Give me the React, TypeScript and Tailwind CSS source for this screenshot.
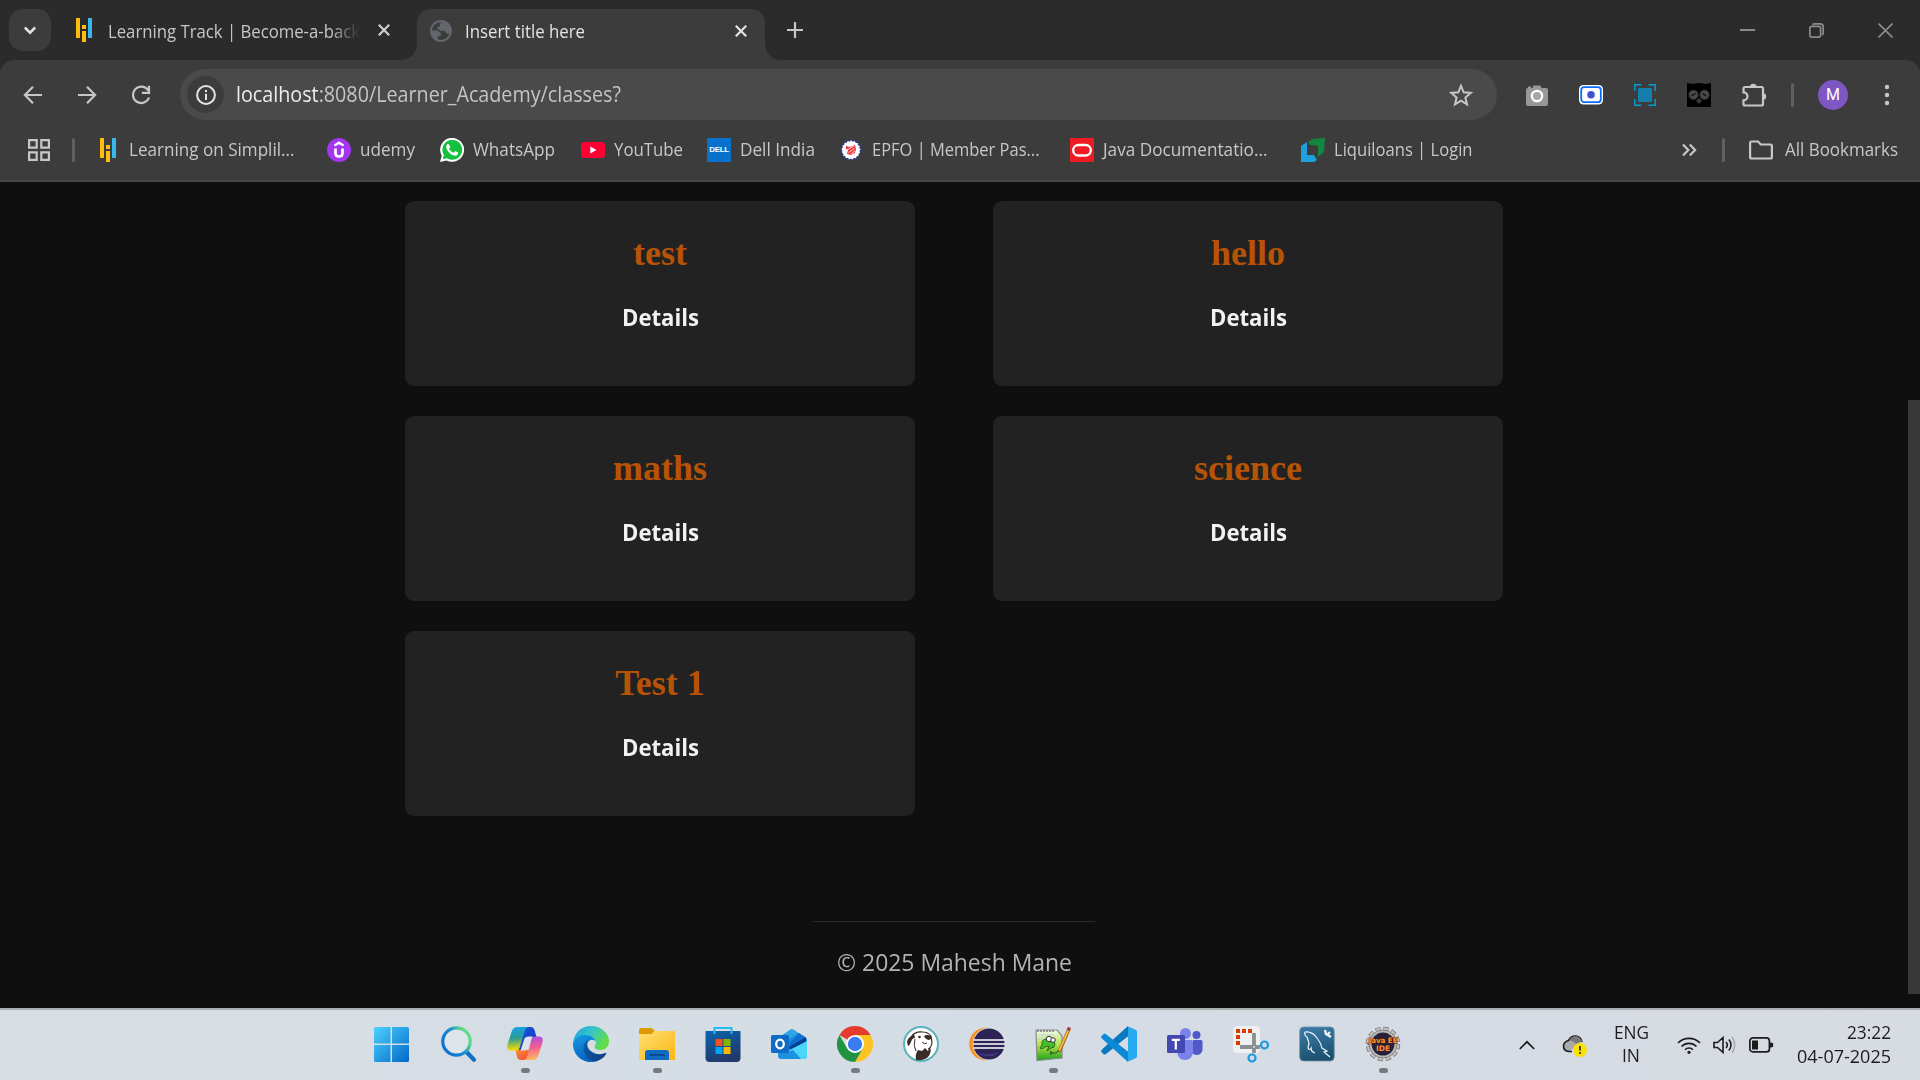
import React, { useLayoutEffect, useRef } from "react";

/** Single line of text condensed or widened to an exact width. */
function Fit({ w, className = "", children }: { w: number; className?: string; children: React.ReactNode }) {
  const ref = useRef<HTMLSpanElement>(null);
  useLayoutEffect(() => {
    const el = ref.current;
    if (el && el.offsetWidth) {
      el.style.transform = "none";
      el.style.transform = `scaleX(${w / el.getBoundingClientRect().width})`;
    }
  }, [w]);
  return (
    <span className="block shrink-0 whitespace-nowrap" style={{ width: w }}>
      <span ref={ref} className={"inline-block origin-left whitespace-nowrap " + className}>{children}</span>
    </span>
  );
}

const Simplilearn = () => (
  <svg width="24" height="24" viewBox="0 0 24 24">
    <path d="M4 0h4v20H4zM10 7h4v4h-4zM10 13h4v11h-4z" fill="#fdbd10" />
    <path d="M16 0h4v20h-4z" fill="#3ab5ee" />
  </svg>
);

const CloseX = ({ color }: { color: string }) => (
  <svg width="14" height="14" viewBox="0 0 14 14">
    <path d="M1.8 1.8l10.4 10.4M12.2 1.8L1.8 12.2" stroke={color} strokeWidth="2.2" />
  </svg>
);

const Globe = () => (
  <svg width="22" height="22" viewBox="0 0 22 22">
    <circle cx="11" cy="11" r="10" fill="none" stroke="#62676d" strokeWidth="2" />
    <path d="M1 10.5h6.5l3.3 2.7v3h-3v4L5 18.5 2 14zM12 1l-2 3v2.5H7.5V9l3 1.8h4l2 2.7 3.5.5 1-3-1-5L16 2z" fill="#62676d" />
  </svg>
);

const TabStrip = () => (
  <div className="flex h-[60px] shrink-0 items-center bg-[#2b2b2b] pl-[9px] pr-[27px]">
    <div className="flex h-[42px] w-[42px] items-center justify-center rounded-[14px] bg-[#3c3c3c]">
      <svg width="14" height="14" viewBox="0 0 14 14"><path d="M1.8 4.5L7 9.7l5.2-5.2" fill="none" stroke="#e3e3e3" strokeWidth="2.5" /></svg>
    </div>
    <div className="flex h-full w-[366px] items-center pl-[21px]">
      <Simplilearn />
      <div className="ml-[12px] w-[252px] overflow-hidden pt-[2px] text-[18px] leading-[28px] text-[#c7c7c7] [mask-image:linear-gradient(to_right,black_88%,transparent)]">
        <Fit w={252}>Learning Track | Become-a-back</Fit>
      </div>
      <div className="ml-[17px]"><CloseX color="#d0d0d0" /></div>
    </div>
    <div className="relative mt-[9px] flex h-[51px] w-[348px] items-center rounded-t-[14px] bg-[#3c3c3c] pb-[8px] pl-[13px] pr-[17px]">
      <span className="absolute -left-[15px] bottom-0 h-[15px] w-[15px] bg-[radial-gradient(circle_at_0_0,transparent_14.5px,#3c3c3c_15px)]" />
      <span className="absolute -right-[15px] bottom-0 h-[15px] w-[15px] bg-[radial-gradient(circle_at_100%_0,transparent_14.5px,#3c3c3c_15px)]" />
      <Globe />
      <div className="ml-[13px] text-[18px] leading-[28px] text-[#e3e3e3]"><Fit w={120}>Insert title here</Fit></div>
      <div className="ml-auto"><CloseX color="#e3e3e3" /></div>
    </div>
    <svg className="ml-[22px]" width="16" height="16" viewBox="0 0 16 16"><path d="M8 0v16M0 8h16" stroke="#c7c7c7" strokeWidth="2.2" /></svg>
    <div className="ml-auto flex items-center gap-[54px]">
      <svg width="15" height="15" viewBox="0 0 15 15"><path d="M0 7h15" stroke="#8b8b8b" strokeWidth="2" /></svg>
      <svg width="15" height="15" viewBox="0 0 15 15" fill="none" stroke="#8b8b8b" strokeWidth="1.7">
        <rect x=".9" y="3.4" width="10.7" height="10.7" rx="2" /><path d="M3.4 1.6Q4.200 .9 5.500 .9H11a3.200 3.200 0 0 1 3.200 3.200V10Q14.200 11.200 13.200 12" />
      </svg>
      <svg width="15" height="15" viewBox="0 0 15 15"><path d="M.5 .5l14 14M14.500 .5l-14 14" stroke="#8b8b8b" strokeWidth="1.600" /></svg>
    </div>
  </div>
);

const Toolbar = () => (
  <div className="flex h-[69px] items-center pl-[23px] pr-[27px]">
    <svg width="20" height="20" viewBox="0 0 20 20" fill="none" stroke="#c7c7c7" strokeWidth="2.2"><path d="M19 10H2.500M10 1.700L1.900 10l8.100 8.300" /></svg>
    <svg className="ml-[34px]" width="20" height="20" viewBox="0 0 20 20" fill="none" stroke="#c7c7c7" strokeWidth="2.2"><path d="M1 10h16.500M10 1.700l8.100 8.300-8.100 8.300" /></svg>
    <svg className="ml-[34px]" width="20" height="20" viewBox="0 0 20 20" fill="none" stroke="#c7c7c7" strokeWidth="2.200"><path d="M17.200 5.500A8.200 8.200 0 1 0 18 12.500M18 .8v7.100h-7.200" /></svg>
    <div className="ml-[29px] flex h-[51px] w-[1317px] items-center rounded-full bg-[#4a4a4a] pl-[7px] pr-[24px]">
      <div className="flex h-[37px] w-[37px] items-center justify-center rounded-full bg-[#3c3c3c]">
        <svg width="20" height="20" viewBox="0 0 20 20"><circle cx="10" cy="10" r="8.900" fill="none" stroke="#e3e3e3" strokeWidth="2" /><path d="M9 5h2v2H9zM9 8.700h2V15H9z" fill="#e3e3e3" /></svg>
      </div>
      <div className="ml-[12px] pb-[2px] text-[21px] leading-[28px] text-[#c4c4c4]">
        <Fit w={385}><span className="text-[#ececec]">localhost</span>:8080/Learner_Academy/classes?</Fit>
      </div>
      <svg className="ml-auto" width="24" height="24" viewBox="0 0 24 24"><path d="M12 2.800l2.700 6.500 7 .6-5.300 4.600 1.600 6.900-6-3.700-6 3.700 1.600-6.900L2.300 9.900l7-.6z" fill="none" stroke="#c7c7c7" strokeWidth="2" /></svg>
    </div>
    <div className="ml-[28px] flex items-center gap-[30px]">
      <svg width="24" height="24" viewBox="0 0 24 24"><path d="M7.500 5l1-2.500h7l1 2.500H21q2 0 2 2v14q0 2-2 2H3q-2 0-2-2V7q0-2 2-2V3.500h3V5z" fill="#989898" /><circle cx="12" cy="13" r="5.200" fill="#a5a5a5" stroke="#fff" strokeWidth="2.200" /></svg>
      <svg width="24" height="24" viewBox="0 0 24 24"><rect x="0" y="2" width="24" height="19.500" rx="4.500" fill="#fff" /><rect x="2.200" y="4.200" width="19.600" height="15" rx="3" fill="#fff" stroke="#0a6cff" strokeWidth="1.800" /><circle cx="12" cy="11.700" r="3.800" fill="#4353d0" /></svg>
      <svg width="24" height="24" viewBox="0 0 24 24"><path d="M5 5h14v14H5z" fill="#147fab" /><path d="M1.800 8V1.800H8.500M15.500 1.800h6.700V8M22.200 16v6.200h-6.700M8.500 22.200H1.800V16" fill="none" stroke="#00a0d8" strokeWidth="1.400" /></svg>
      <svg width="26" height="26" viewBox="0 0 26 26" className="-mx-px"><path d="M1 1l6 1q6-2 12 0l6-1v24H1z" fill="#000" /><circle cx="7.500" cy="12.800" r="4.600" fill="#4b4b4b" stroke="#333" strokeWidth="1.500" strokeDasharray="1 1" /><circle cx="18.500" cy="12.800" r="4.600" fill="#4b4b4b" stroke="#333" strokeWidth="1.500" strokeDasharray="1 1" /><path d="M5.500 14l4-2.500M16.500 11.500l4 2.500" stroke="#1a1a1a" strokeWidth="1.500" /><path d="M13 16l3 3-3 3-3-3z" fill="#393939" /></svg>
      <svg width="26" height="26" viewBox="0 0 26 26" fill="none"><path d="M4 5h16.500q1.500 0 1.500 1.500V22q0 1.500-1.500 1.500H4q-1.500 0-1.500-1.500v-3.700a4 4 0 0 0 0-8V6.500Q2.500 5 4 5z" stroke="#c7c7c7" strokeWidth="2.200" /><path d="M9 5a3.300 3.300 0 0 1 6.600 0zM22 11.300a3.200 3.200 0 0 1 0 6.400z" fill="#c7c7c7" /></svg>
    </div>
    <div className="ml-[24px] h-[24px] w-[3px] rounded-full bg-[#606060]" />
    <div className="ml-[24px] flex h-[30px] w-[30px] items-center justify-center rounded-full bg-[#7e57c2] font-['Roboto'] text-[16px] font-normal text-white">M</div>
    <svg className="ml-auto" width="12" height="24" viewBox="0 0 12 24" fill="#c7c7c7"><circle cx="6" cy="4" r="2.200" /><circle cx="6" cy="12" r="2.200" /><circle cx="6" cy="20" r="2.200" /></svg>
  </div>
);

const Udemy = () => (
  <svg width="24" height="24" viewBox="0 0 24 24"><circle cx="12" cy="12" r="12" fill="#a435f0" /><path d="M8.500 10.500v4.700q0 3.300 3.500 3.300t3.500-3.300v-4.700" fill="none" stroke="#fff" strokeWidth="2.700" /><path d="M7.500 7.500L12 4.700l4.500 2.800" fill="none" stroke="#fff" strokeWidth="2.300" /></svg>
);
const WhatsApp = () => (
  <svg width="24" height="24" viewBox="0 0 24 24"><path d="M0 24l1.700-6.200A12 12 0 1 1 6.400 22.400z" fill="#fff" /><path d="M2.700 21.300l1.200-4.200A9.900 9.900 0 1 1 7 20.200z" fill="#14c13e" /><path d="M8.700 6.300c-.5-.4-1.300-.3-1.800.3-2.900 3.300 3.300 11.200 8.200 11.200 2 0 3.300-1.400 3-3.200l-3-1.500-1.400 1.700c-2.400-.8-4-2.600-4.600-4.100L10.300 9z" fill="#fff" /></svg>
);
const YouTube = () => (
  <svg width="24" height="24" viewBox="0 0 24 24"><rect y="4" width="24" height="16" rx="3.500" fill="#ff0033" /><path d="M9.300 8.500v7l6.200-3.500z" fill="#fff" /></svg>
);
const Dell = () => (
  <div className="flex h-6 w-6 items-center justify-center bg-[#0672cb] font-['Liberation_Sans'] text-[8px] font-bold leading-none tracking-[-0.4px] text-white">DELL</div>
);
const Epfo = () => (
  <svg width="24" height="24" viewBox="0 0 24 24"><circle cx="12" cy="12" r="9.500" fill="#fff" stroke="#263f9b" strokeWidth="1.800" strokeDasharray="2 1.500" /><circle cx="12" cy="12" r="8.500" fill="#fff" /><path d="M7 8l4 1 5-2 1 4-1 4-4 2-4-1 1-4-2-1z" fill="#f03838" /><path d="M8 12l7-4M9.500 14.500l6-4M12 16l4-3" stroke="#fff" strokeWidth=".8" /></svg>
);
const Oracle = () => (
  <svg width="24" height="24" viewBox="0 0 24 24"><path d="M0 0h24v24H0z" fill="#ee1b24" /><rect x="3.200" y="7" width="17.600" height="10.500" rx="5.200" fill="none" stroke="#fff" strokeWidth="2.300" /></svg>
);
const Liquiloans = () => (
  <svg width="24" height="24" viewBox="0 0 24 24"><path d="M7 4l4-3 13-1-1 14-6 5V8L9 7z" fill="#12853f" /><path d="M0 8l6-4v13h7l3 5-3 2H0z" fill="#1f9fdd" /></svg>
);

const bookmarks: [React.FC, string, number][] = [
  [Simplilearn, "Learning on Simplil...", 165.5],
  [Udemy, "udemy", 55],
  [WhatsApp, "WhatsApp", 82],
  [YouTube, "YouTube", 69],
  [Dell, "Dell India", 75],
  [Epfo, "EPFO | Member Pas...", 167.5],
  [Oracle, "Java Documentatio...", 164.5],
  [Liquiloans, "Liquiloans | Login", 138.5],
];

const BookmarksBar = () => (
  <div className="flex h-[41px] items-center pt-px text-[18px] leading-[28px] text-[#c7c7c7]">
    <svg className="ml-[28px]" width="22" height="22" viewBox="0 0 22 22" fill="none" stroke="#c7c7c7" strokeWidth="2.200"><path d="M1.100 1.100h7.600v7.600H1.100zM13.300 1.100h7.600v7.600h-7.600zM1.100 13.300h7.600v7.600H1.100zM13.300 13.300h7.600v7.600h-7.600z" /></svg>
    <div className="ml-[22px] h-[24px] w-[3px] rounded-full bg-[#606060]" />
    <div className="ml-[21px] grid grid-cols-[231px_113px_141px_126px_132px_231px_231px_200px]">
      {bookmarks.map(([Icon, label, w]) => (
        <div key={label} className="flex items-center gap-[9px]">
          <Icon />
          <div className="-mt-[2px]"><Fit w={w}>{label}</Fit></div>
        </div>
      ))}
    </div>
    <div className="ml-auto flex items-center pr-[22px]">
      <svg width="16" height="14" viewBox="0 0 16 14" fill="none" stroke="#c7c7c7" strokeWidth="2.200"><path d="M2 1.500L7.300 7 2 12.500M8.800 1.500L14.100 7l-5.300 5.500" /></svg>
      <div className="ml-[25px] h-[24px] w-[3px] rounded-full bg-[#606060]" />
      <svg className="ml-[24px]" width="24" height="20" viewBox="0 0 24 20" fill="none" stroke="#c7c7c7" strokeWidth="2.200"><path d="M1.100 3q0-1.500 1.500-1.500H9l2.800 3h9.600q1.500 0 1.500 1.500v11q0 1.500-1.500 1.500H2.600q-1.500 0-1.500-1.500z" /></svg>
      <div className="-mt-[2px] ml-[12px]"><Fit w={113}>All Bookmarks</Fit></div>
    </div>
  </div>
);

const classes = ["test", "hello", "maths", "science", "Test 1"];

const Page = () => (
  <div className="flex h-[826px] shrink-0 bg-[#0f0f0f]">
    <div className="flex flex-1 flex-col items-center pt-[19px]">
      <div className="grid grid-cols-[510px_510px] gap-x-[78px] gap-y-[30px]">
        {classes.map((name) => (
          <div key={name} className="flex h-[185px] flex-col items-center rounded-[9px] bg-[#222] pt-[32px]">
            <h2 className="font-['Liberation_Serif'] text-[36px] font-bold leading-[40px] text-[#b75306]">{name}</h2>
            <a className="mt-[28px] text-[24px] font-bold leading-[32px] text-[#f2f2f2]"><Fit w={77}>Details</Fit></a>
          </div>
        ))}
      </div>
      <div className="mt-[105px] flex w-[282px] flex-col items-center border-t border-[#2a2a2a] pt-[24px] text-[24px] leading-[32px] text-[#b3b3b3]">
        <Fit w={235}>© 2025 Mahesh Mane</Fit>
      </div>
    </div>
    <div className="w-[12px] pt-[218px]"><div className="h-[594px] bg-[#383838]" /></div>
  </div>
);

const I = ({ children }: { children: React.ReactNode }) => <svg className="overflow-visible" width="36" height="36" viewBox="0 0 36 36">{children}</svg>;
const G = ({ id, a, b, m, x2 = 1, y2 = 1 }: { id: string; a: string; b: string; m?: string; x2?: number; y2?: number }) => (
  <linearGradient id={id} x1="0" y1="0" x2={x2} y2={y2}><stop stopColor={a} />{m && <stop offset=".5" stopColor={m} />}<stop offset="1" stopColor={b} /></linearGradient>
);

const Start = () => (
  <I><defs><linearGradient id="win" gradientUnits="userSpaceOnUse" x1="0" y1="0" x2="36" y2="36"><stop stopColor="#4fd4ff" /><stop offset="1" stopColor="#0067c8" /></linearGradient></defs>
    <path transform="translate(-1.500 0)" d="M2 1h15v16.500H.5V2.500Q.5 1 2 1zM18.500 1H34q1.500 0 1.500 1.500v15h-17zM.5 19H17v17H2Q.5 36 .5 34.500zM18.500 19h17v15.500q0 1.500-1.500 1.500H18.500z" fill="url(#win)" /></I>
);
const Search = () => (
  <I><defs><linearGradient id="se" x1="0" y1=".8" x2="1" y2=".2"><stop stopColor="#0a6fd0" /><stop offset=".5" stopColor="#148bd8" /><stop offset=".85" stopColor="#5edb86" /></linearGradient></defs>
    <path d="M25 25.500l8 8.200" stroke="#0f6fc9" strokeWidth="4.200" strokeLinecap="round" /><circle cx="15.500" cy="15.500" r="13.700" fill="#dfe4ea" stroke="url(#se)" strokeWidth="3.200" /></I>
);
const Copilot = () => (
  <I><defs><G id="c1" a="#17a2ea" m="#2b9c96" b="#f7dc00" x2={0.1} /><G id="c2" a="#1560e8" b="#1630b4" /><G id="c3" a="#a04cec" m="#f35d92" b="#ffb35e" x2={0.1} /><G id="c4" a="#ff8b2d" b="#e8433c" /></defs>
    <path d="M11 1h13q2.500 0 3.500 3l2 7h-7q-2 0-3 2.500L16 24H9z" fill="url(#c2)" />
    <path d="M8.500 24h18l-3 8q-1 2-3.500 2h-6q-3 0-4-3z" fill="url(#c4)" />
    <path d="M17.500 12.500q1-2 4-2h4L21 22q-.8 2.500-3.500 2.500h-4z" fill="#dde2ea" />
    <path d="M10.500 1H21q-2 0-3 3l-5.500 18q-.7 2.500-3.200 2.500H4q-5 0-3.500-6L4.500 6q1.500-5 6-5z" fill="url(#c1)" />
    <path d="M25.500 34H17q2-.5 3-3l4.500-18q.6-2.500 3-2.500H32q5 0 3.500 6l-4 12.500q-1.500 5-6 5z" fill="url(#c3)" /></I>
);
const Edge = () => (
  <I><defs><G id="e1" a="#1d9de2" m="#34c6c9" b="#64dd45" y2={0.500} /><G id="e2" a="#139be0" b="#0964c4" x2={0.300} /><G id="e3" a="#0c5cae" b="#11407e" /></defs>
    <path d="M0 17C1 7 8 0 18 0c11 0 18 8 18 15 0 6-4 9-8.500 9-4 0-6-1.500-6-3 0-1 1.500-2 1.500-4.500C23 12 18 9.500 12 9.500 5 9.500 1 14 0 17z" fill="url(#e1)" />
    <path d="M0 17c2-5.500 6.500-8 12-8 6 0 10 3 10.700 6-6-3.500-11 1-11 7.500 0 7 5.500 12.500 12.500 12.500C21 36.300 19 36 18 36 8 36-.5 28 0 17z" fill="url(#e2)" />
    <path d="M18.500 13.500C13 14 10.500 18 10.500 22c0 8 6.500 14 13 13.200 4.500-1.200 8-4.200 9.800-7.500.3-.8-.3-1-1-.7-8 3.500-18-1.500-18-8.500 0-2.500 1.800-4.500 4.200-5z" fill="url(#e3)" /></I>
);
const Explorer = () => (
  <I><defs><G id="f1" a="#ffe074" b="#fcb514" /></defs>
    <path d="M2 2h10q1.500 0 2.500 1.500L16 5v5H0V4q0-2 2-2z" fill="#dd9a06" /><path d="M0 8h11.500q1.500 0 2.500-1.500L15 5h20q1 0 1 1v28H0z" fill="url(#f1)" /><path d="M6 34v-7q0-3 3-3h18q3 0 3 3v7z" fill="#0d6bc2" /><path d="M11 29h14" stroke="#093f7e" strokeWidth="1.600" strokeLinecap="round" /></I>
);
const Store = () => (
  <I><defs><G id="s1" a="#0a66ae" b="#22396d" x2={0.400} /></defs><path d="M.5 5h35v27q0 4-4 4h-27q-4 0-4-4z" fill="url(#s1)" /><path d="M9.500 8V2h17v6" fill="none" stroke="#27b9f2" strokeWidth="2" />
    <path d="M10.500 13h7v7h-7z" fill="#f25022" /><path d="M18.500 13h7v7h-7z" fill="#7fba00" /><path d="M10.500 21h7v7h-7z" fill="#00a4ef" /><path d="M18.500 21h7v7h-7z" fill="#ffb900" /></I>
);
const Outlook = () => (
  <I><path d="M7 12L19 4q2-1.500 4 0l13 9v16q0 4-4 4H11q-4 0-4-4z" fill="#1b8edb" /><path d="M11 11L20 3l7 4-16 11z" fill="#29a7e8" /><path d="M18 18L28 7l7 4.500L20 22z" fill="#0f70cf" /><path d="M18 21l17-10v5L20 25z" fill="#063f94" /><path d="M36 15v15q0 3-3 3H12q-3 0-5-3z" fill="#4bd5f8" /><path d="M8 26h9l5-2 8 9H11q-4 0-4-4z" fill="#1b92e0" />
    <rect y="9" width="18" height="18" rx="1.500" fill="#0f6cc6" /><ellipse cx="9" cy="18" rx="3.800" ry="4.400" fill="none" stroke="#fff" strokeWidth="2.300" /></I>
);
const Chrome = () => (
  <I><path d="M18 18L2.400 9A18 18 0 0 1 33.600 9z" fill="#e33b2e" /><path d="M18 9h15.600A18 18 0 0 1 18 36l7.800-13.500z" fill="#fcc322" /><path d="M2.400 9l7.800 13.500L18 27l7.800-4.500L18 36A18 18 0 0 1 2.400 9z" fill="#229342" /><circle cx="18" cy="18" r="9" fill="#fff" /><circle cx="18" cy="18" r="7.200" fill="#3a7df0" /></I>
);
const DBeaver = () => (
  <I><circle cx="18" cy="18" r="17" fill="#fff" stroke="#5bb5bd" strokeWidth="2" />
    <path d="M8 11q4-6 12-5 5 0 8 4l1 7q-1 5-4 6" fill="none" stroke="#3b2c27" strokeWidth="1.200" />
    <path d="M4 16q1-5 5-6l2-2 1 4q-3 0-4 4-1 3-3 4zM21 10q3-2 7 0 1 3-2 4-4-1-5-4zM13 34q-1-6 2-10l4 1 3-3 3 3 2-4q2 5-2 10-5 4-12 3z" fill="#3b2c27" /><circle cx="16.500" cy="11" r="1.300" fill="#3b2c27" /><path d="M12 13q-2 7 1 12M19 16q2 3 5 1" stroke="#3b2c27" fill="none" /></I>
);
const Eclipse = () => (
  <I><circle cx="16.500" cy="18" r="16.300" fill="#f7941e" /><circle cx="20" cy="18" r="16.300" fill="#e3e5ea" /><circle cx="20" cy="18" r="15.600" fill="#2c2255" /><path d="M8 26q10 5 22 0-5 5-11 4-7 0-11-4z" fill="#453a83" /><path d="M4.500 14h31M4 18h32M4.500 22h31" stroke="#fff" strokeWidth="1.700" /></I>
);
const Notepad = () => (
  <I><defs><G id="n1" a="#f4f9ed" m="#b5e04d" b="#18a21c" x2={0} /></defs><path d="M1 4h21l5 6v22l-25 2.500z" fill="url(#n1)" stroke="#8b8b8b" strokeWidth="1.200" /><path d="M3 4v2M6 4v2M9 4v2M12 4v2M15 4v2M18 4v2" stroke="#777" strokeWidth="1.500" /><path d="M4 9h15M3 13h9" stroke="#a9cfee" strokeWidth=".8" /><path d="M7 19q-1-6 5-6 6 0 8 5 0 4-4 4l-4 3 2-5-4 1q-4 3-5 1z" fill="#4abb29" stroke="#276a17" /><circle cx="14" cy="13" r="2.700" fill="#fff" stroke="#333" /><circle cx="18" cy="14" r="2.300" fill="#fff" stroke="#333" /><path d="M34 3L24 26" stroke="#9b661c" strokeWidth="3.400" /><path d="M33.500 4L24 25" stroke="#f5b73c" strokeWidth="1.900" /><path d="M34.500 1.500l-1.300 3" stroke="#a1343d" strokeWidth="3.200" /><path d="M15 27h6l3-3M16 25v4" stroke="#1e4e14" fill="none" /></I>
);
const VSCode = () => (
  <I><path d="M27 0L2 22.500l-1.600 1.700q-.8 1 .2 2l2 2q1 .8 2 0L27 10.500z" fill="#0879be" /><path d="M27 36L2 13.500.5 12q-.8-1 .2-2l2-2q1-.8 2 0L27 25.500z" fill="#0b8ad6" /><path d="M26 0l9 4q1 .5 1 1.500v25q0 1-1 1.500l-9 4q1-.5 1-2V2q0-1.500-1-2z" fill="#27a9f1" /><path d="M27 10.500L17.500 18l9.500 7.500z" fill="#d6dce4" /></I>
);
const Teams = () => (
  <I><circle cx="18.500" cy="7.500" r="5.500" fill="#7b83eb" /><circle cx="29.500" cy="9" r="4" fill="#5059c9" /><path d="M26 14h8q1.500 0 1.500 1.500V24q-1 5-6 5-3 0-4.500-2z" fill="#5059c9" /><path d="M11 14h13q2 0 2 2v10q-1 8-8 8-6 0-7.500-6z" fill="#7b83eb" /><rect y="9" width="18" height="18" rx="1.500" fill="#4349b0" /><path d="M4.800 13.800h8M8.800 14v9.500" stroke="#fff" strokeWidth="2.200" /></I>
);
const Snip = () => (
  <I><rect width="27" height="27" rx="3.500" fill="#eff0f2" /><path d="M3 3h4v4H3zM9 3h4v4H9zM15 3h4v4h-4zM3 9h4v4H3zM3 15h4v4H3z" fill="#d83b01" /><path d="M21 7v20M7 21h20" stroke="#8a8f94" strokeWidth="3.800" /><circle cx="21" cy="21" r="1" fill="#ddd" /><circle cx="31.500" cy="19" r="3.500" fill="none" stroke="#1c9be0" strokeWidth="2.200" /><circle cx="19" cy="32" r="3.500" fill="none" stroke="#1c9be0" strokeWidth="2.200" /></I>
);
const MySQL = () => (
  <I><defs><G id="m1" a="#3c7eaa" b="#1d506e" x2={0.200} /></defs><rect x=".7" y="1" width="34.500" height="34" rx="4" fill="url(#m1)" stroke="#6c91a8" strokeWidth=".8" /><path d="M6 6q7-1 12 6 4 5 5 10l5 3-3 1 6 5M6 6q-1 3 2 5l2 6-1 5q1 3 3 0 0 4 4 5" fill="none" stroke="#eef5f9" strokeWidth="1.200" /><path d="M26 4l1 4 5 3M31 6l-3 3" stroke="#f4f8fa" strokeWidth="2.300" fill="none" /></I>
);
const JavaEE = () => (
  <I><circle cx="18" cy="18" r="15" fill="none" stroke="#717171" strokeWidth="4.500" strokeDasharray="5 2.850" /><circle cx="18" cy="18" r="15" fill="none" stroke="#c3c3c3" strokeWidth="3" strokeDasharray="4 3.850" strokeDashoffset="-.5" /><circle cx="18" cy="18" r="14" fill="#b9b9b9" stroke="#777" strokeWidth=".8" /><circle cx="18" cy="18" r="11.500" fill="#282039" />
    <text x="3.500" y="17" textLength="29" lengthAdjust="spacingAndGlyphs" fontFamily="DejaVu Sans" fontSize="7.500" fontWeight="bold" fill="#ff9228" stroke="#402008" strokeWidth=".8" paintOrder="stroke">Java EE</text>
    <text x="18" y="24.500" textAnchor="middle" fontFamily="DejaVu Sans" fontSize="7.500" fontWeight="bold" fill="#ff9228">IDE</text></I>
);

const apps: [React.FC, boolean][] = [
  [Start, false], [Search, false], [Copilot, true], [Edge, false], [Explorer, true], [Store, false], [Outlook, false], [Chrome, true],
  [DBeaver, false], [Eclipse, false], [Notepad, true], [VSCode, false], [Teams, false], [Snip, false], [MySQL, false], [JavaEE, true],
];

const Taskbar = () => (
  <div className="flex h-[72px] shrink-0 border-t-2 border-[#abaeb0] bg-linear-to-r from-[#d8dfe4] via-[#d4dce5] to-[#d7dbe2] text-[18px] leading-[24px] text-[#1c1c1c]">
    <div className="ml-[360px] flex">
      {apps.map(([Icon, open], i) => (
        <div key={i} className="flex w-[66px] flex-col items-center pt-[16px]">
          <Icon />
          {open && <div className="mt-[6px] h-[5px] w-[9px] rounded-full bg-[#77797c]" />}
        </div>
      ))}
    </div>
    <div className="ml-auto flex h-full items-center pr-[28px]">
      <svg width="16" height="10" viewBox="0 0 16 10"><path d="M.8 9L8 1.800 15.200 9" fill="none" stroke="#1c1c1c" strokeWidth="1.700" /></svg>
      <svg className="ml-[27px]" width="26" height="24" viewBox="0 0 26 24"><path d="M7 18q-6 0-6-5 0-4 5-5.500Q9 2.500 14 3q4 0 6 5l-6 5-6 5z" fill="#aaa" /><path d="M10 18.500H7q-5.500-.5-5.500-5.500 0-4 5-5.500Q9 2.500 14 3q5 .5 6 6" fill="none" stroke="#1c1c1c" strokeWidth="1.600" /><path d="M7 7.500q4 0 7 3.500l6-3q-2-4.500-6-5-4.500 0-7 4.500z" fill="#777" /><circle cx="18" cy="17" r="7" fill="#fbe100" /><path d="M18 13v4.500M18 19v2" stroke="#222" strokeWidth="1.600" /></svg>
      <div className="ml-[25px] mr-px flex w-[36px] flex-col items-center pb-[2px] leading-[23px]"><Fit w={35}>ENG</Fit><Fit w={18}>IN</Fit></div>
      <svg className="ml-[27px]" width="24" height="20" viewBox="0 0 24 20" fill="none" stroke="#1c1c1c" strokeWidth="1.600"><path d="M1 8a15.500 15.500 0 0 1 22 0M4.500 11.500a10.600 10.600 0 0 1 15 0M8 14.700a5.700 5.700 0 0 1 8 0" /><circle cx="12" cy="17.300" r="1.600" fill="#1c1c1c" stroke="none" /></svg>
      <svg className="ml-[12px]" width="25" height="20" viewBox="0 0 25 20" fill="none" stroke="#1c1c1c" strokeWidth="1.600"><path d="M1 7.500h3.500L10 2.500v15l-5.500-5H1zM13 7a4.500 4.500 0 0 1 0 6M15.800 4.500a8 8 0 0 1 0 11" /><path d="M19 2q5.500 8 0 16" stroke="#aaa" /></svg>
      <svg className="ml-[11px]" width="25" height="16" viewBox="0 0 25 16"><rect x=".9" y=".9" width="19.500" height="14" rx="3" fill="none" stroke="#1c1c1c" strokeWidth="1.700" /><path d="M3 3.500h6v9H3zM21 5.500h1.500l1.700 1v3l-1.700 1H21z" fill="#1c1c1c" /></svg>
      <div className="ml-[23px] mr-px flex w-[94px] flex-col items-end pb-[3px]"><Fit w={44}>23:22</Fit><Fit w={94}>04-07-2025</Fit></div>
    </div>
  </div>
);

export default function App() {
  return (
    <div className="flex h-[1080px] w-[1920px] flex-col overflow-hidden bg-[#0f0f0f] font-['Open_Sans','Noto_Sans',sans-serif]">
      <TabStrip />
      <div className="shrink-0 bg-[#2b2b2b]">
        <div className="h-[122px] rounded-t-[14px] border-b-2 border-[#484848] bg-[#3c3c3c]">
          <Toolbar />
          <BookmarksBar />
        </div>
      </div>
      <Page />
      <Taskbar />
    </div>
  );
}
